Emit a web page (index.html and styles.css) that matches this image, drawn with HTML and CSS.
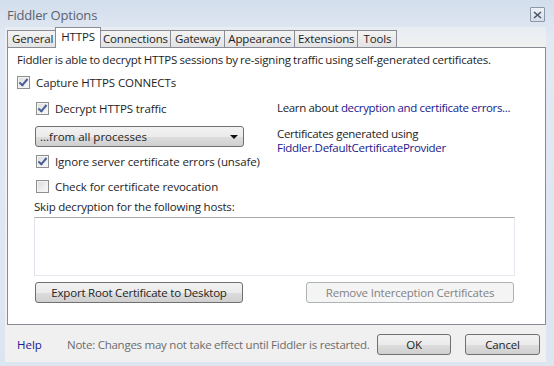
FILE: index.html
```html
<!DOCTYPE html>
<html>
<head>
<meta charset="utf-8">
<link rel="stylesheet" href="styles.css">
</head>
<body>
<div class="window">
  <div class="titlebar">
    <span class="title">Fiddler Options</span>
    <span class="close"><svg width="9" height="8" viewBox="0 0 9 8"><path d="M1 1 L8 7 M8 1 L1 7" stroke="#4a5566" stroke-width="1.6" fill="none"/></svg></span>
  </div>
  <div class="client">
    <div class="tabs">
      <div class="tab">General</div>
      <div class="tab active">HTTPS</div>
      <div class="tab">Connections</div>
      <div class="tab">Gateway</div>
      <div class="tab">Appearance</div>
      <div class="tab">Extensions</div>
      <div class="tab">Tools</div>
    </div>
    <div class="panel">
      <p class="desc">Fiddler is able to decrypt HTTPS sessions by re-signing traffic using self-generated certificates.</p>
      <label class="check top"><span class="box checked"></span>Capture HTTPS CONNECTs</label>
      <div class="columns">
        <div class="left">
          <label class="check"><span class="box checked"></span>Decrypt HTTPS traffic</label>
          <div class="select"><span>...from all processes</span><span class="arrow"></span></div>
          <label class="check"><span class="box checked"></span>Ignore server certificate errors (unsafe)</label>
          <label class="check"><span class="box"></span>Check for certificate revocation</label>
        </div>
        <div class="right">
          <div class="learn">Learn about <a>decryption and certificate errors...</a></div>
          <div class="certs">Certificates generated using<br><a>Fiddler.DefaultCertificateProvider</a></div>
        </div>
      </div>
      <div class="skip">Skip decryption for the following hosts:</div>
      <div class="hosts"></div>
      <div class="buttons">
        <div class="btn wide">Export Root Certificate to Desktop</div>
        <div class="btn wide disabled">Remove Interception Certificates</div>
      </div>
    </div>
    <div class="footer">
      <a class="help">Help</a>
      <span class="note">Note: Changes may not take effect until Fiddler is restarted.</span>
      <div class="btn ok">OK</div>
      <div class="btn cancel">Cancel</div>
    </div>
  </div>
</div>
</body>
</html>
```
FILE: styles.css
```css
html, body { margin: 0; padding: 0; }
body {
  width: 554px;
  height: 366px;
  overflow: hidden;
  font-family: "Open Sans", "Noto Sans", sans-serif;
  font-size: 11.5px;
  color: #1e1e1e;
}
.window {
  width: 554px;
  height: 366px;
  box-sizing: border-box;
  background: linear-gradient(to bottom, #d3deec 0%, #e2e9f3 40px, #dce5f0 100%);
  display: flex;
  flex-direction: column;
  padding: 0 0 4px 5px;
}
.titlebar {
  height: 27px;
  flex: none;
  display: flex;
  align-items: center;
  justify-content: space-between;
  padding: 0 9px 0 2px;
}
.title {
  font-size: 13px;
  color: #5a6270;
  letter-spacing: -0.2px;
  margin-top: 2px;
}
.close {
  width: 13px;
  height: 13px;
  border: 1px solid #8c97a7;
  background: linear-gradient(#eef2f7, #d6dde8);
  display: flex;
  align-items: center;
  justify-content: center;
  border-radius: 1px;
  margin-top: 2px;
}
.client {
  flex: 1;
  background: linear-gradient(to bottom, #e8edf3 0px, #f0f0f0 20px);
  display: flex;
  flex-direction: column;
  padding: 0 0 0 2px;
  margin-right: 8px;
}
.tabs {
  display: flex;
  align-items: flex-end;
  height: 19px;
  position: relative;
  z-index: 1;
  padding-top: 1px;
}
.tab {
  height: 16px;
  line-height: 16px;
  padding: 0 3px;
  border: 1px solid #898c95;
  border-bottom: none;
  margin-right: -1px;
  background: linear-gradient(#f3f3f3, #e3e3e3);
  color: #1e1e1e;
  white-space: nowrap;
  letter-spacing: -0.15px;
}
.tab:first-child { padding-left: 4px; }
.tab:nth-child(3) { padding: 0 2px 0 3px; }
.tab:nth-child(4) { padding: 0 4px; }
.tab:last-child { padding: 0 5px; }
.tab.active {
  line-height: 17px;
  background: #fff;
  margin-left: -1px;
  margin-right: -2px;
  padding: 0 5px;
  position: relative;
  z-index: 2;
  height: 20px;
  margin-bottom: -1px;
}
.panel {
  height: 278px;
  flex: none;
  box-sizing: border-box;
  background: #fff;
  border: 1px solid #898c95;
  padding: 3px 9px 0 9px;
  display: flex;
  flex-direction: column;
}
.desc {
  margin: 1px 0 0 0;
  line-height: 16px;
  letter-spacing: -0.2px;
  word-spacing: -0.5px;
}
.check {
  display: flex;
  align-items: center;
  height: 16px;
  letter-spacing: -0.1px;
}
.check.top { margin-top: 6px; }
.box {
  width: 11px;
  height: 11px;
  border: 1px solid #8e8f8f;
  background: linear-gradient(135deg, #dcdcdc, #fafafa);
  box-shadow: inset 0 0 0 1px #f4f4f4;
  margin-right: 6px;
  position: relative;
  flex: none;
}
.box.checked::after {
  content: "";
  position: absolute;
  left: 3px;
  top: 0px;
  width: 3px;
  height: 7px;
  border: solid #4a5f97;
  border-width: 0 2px 2px 0;
  transform: rotate(40deg);
}
.columns {
  display: flex;
  margin-top: 10px;
}
.left {
  width: 241px;
  padding-left: 19px;
  display: flex;
  flex-direction: column;
}
.left .check:nth-child(3) { margin-top: 6px; }
.left .check:nth-child(4) { margin-top: 9px; }
.select {
  margin-top: 10px;
  width: 199px;
  height: 19px;
  border: 1px solid #707070;
  border-radius: 3px;
  background: linear-gradient(#f2f2f2 0%, #ebebeb 50%, #dddddd 51%, #cfcfcf 100%);
  display: flex;
  align-items: center;
  justify-content: space-between;
  padding: 0 4px;
  box-sizing: content-box;
  margin-left: -1px;
}
.arrow {
  width: 0;
  height: 0;
  border-left: 4px solid transparent;
  border-right: 4px solid transparent;
  border-top: 4px solid #111;
  margin-right: 1px;
}
.right {
  padding-left: 0;
  display: flex;
  flex-direction: column;
}
a { color: #20208c; text-decoration: none; }
.learn { line-height: 16px; letter-spacing: -0.35px; }
.certs { margin-top: 11px; line-height: 14px; letter-spacing: -0.3px; }
.skip {
  margin-top: 5px;
  padding-left: 17px;
  line-height: 16px;
  letter-spacing: -0.2px;
}
.hosts {
  margin: 2px 0 0 17px;
  width: 479px;
  height: 57px;
  border: 1px solid #ababab;
  border-color: #ababab #e3e9ef #e3e9ef #e2e3ea;
}
.buttons {
  display: flex;
  justify-content: space-between;
  margin: 6px 0 0 18px;
  width: 479px;
}
.btn {
  box-sizing: border-box;
  height: 21px;
  border: 1px solid #707070;
  border-radius: 3px;
  background: linear-gradient(#f2f2f2 0%, #ebebeb 50%, #dddddd 51%, #cfcfcf 100%);
  display: flex;
  align-items: center;
  justify-content: center;
  letter-spacing: -0.2px;
  color: #1e1e1e;
}
.btn.wide { width: 208px; }
.btn.disabled {
  border-color: #adb2b5;
  background: #f4f4f4;
  color: #838383;
}
.footer {
  flex: 1;
  display: flex;
  align-items: center;
  padding: 1px 0 0 10px;
}
.help { color: #20208c; width: 50px; }
.note { color: #6d6d6d; letter-spacing: -0.25px; width: 310px; }
.btn.ok { width: 74px; }
.btn.cancel { width: 75px; margin-left: 14px; }
```
